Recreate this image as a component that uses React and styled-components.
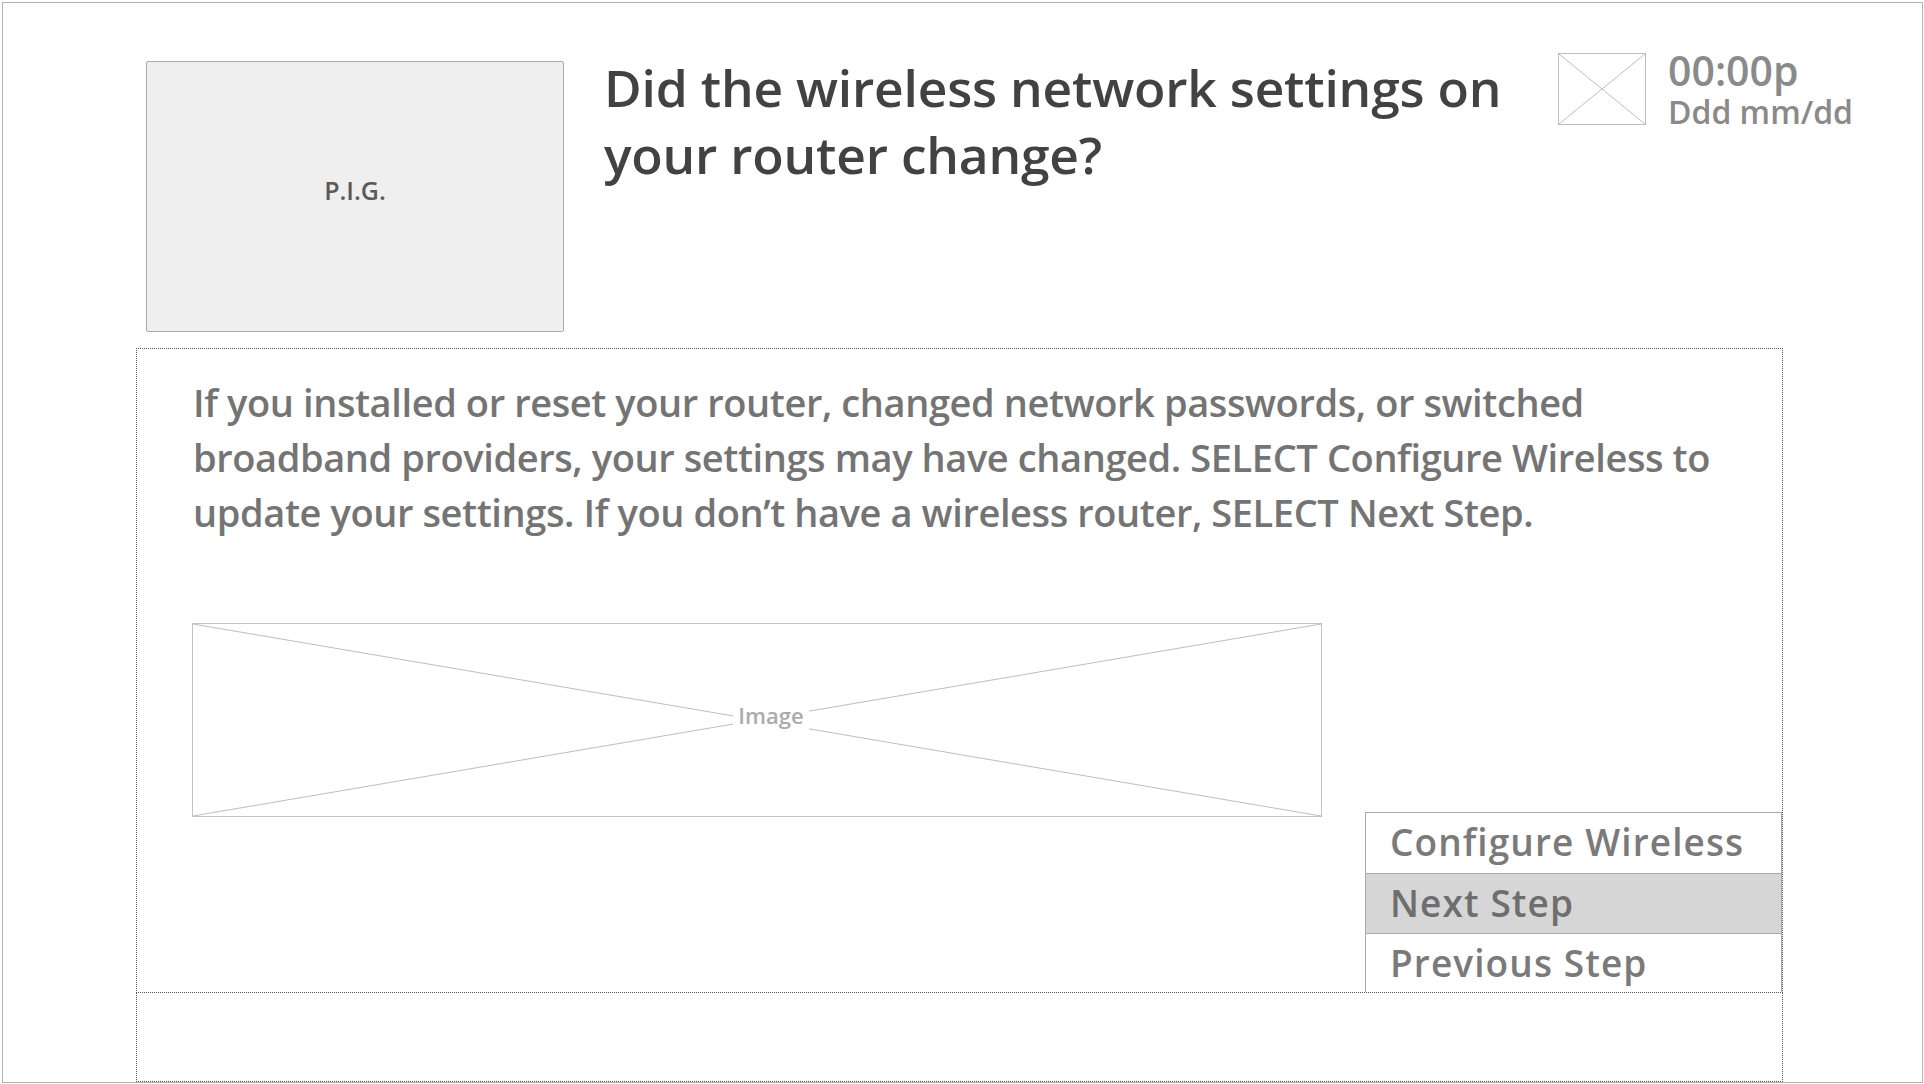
import React from "react";
import styled, { createGlobalStyle } from "styled-components";

const Global = createGlobalStyle`
  html, body { margin: 0; padding: 0; background: #ffffff; }
  body { font-family: "Open Sans", "Noto Sans", sans-serif; }
  * { box-sizing: border-box; }
`;

const Frame = styled.div`
  margin: 2px;
  width: 1921px;
  height: 1081px;
  border: 1px solid #b3b3b3;
  background: #fff;
  display: flex;
  flex-direction: column;
  overflow: hidden;
`;

const Header = styled.header`
  display: flex;
  align-items: flex-start;
  padding: 47px 0 16px 143px;
`;

const Pig = styled.div`
  margin-top: 11px;
  width: 418px;
  height: 271px;
  flex: 0 0 auto;
  background: #efefef;
  border: 1px solid #aaaaaa;
  border-radius: 2px;
  display: flex;
  align-items: center;
  justify-content: center;
  padding-bottom: 14px;
  color: #5a5a5a;
  font-size: 25px;
  font-weight: 600;
`;

const Title = styled.h1`
  margin: 4px 0 0 40px;
  width: 930px;
  flex: 0 0 auto;
  font-size: 51.5px;
  line-height: 67px;
  font-weight: 600;
  letter-spacing: -0.2px;
  color: #424242;
`;

const Clock = styled.div`
  margin-left: 24px;
  display: flex;
  align-items: flex-start;
  gap: 22px;
`;

const IconBox = styled.div`
  margin-top: 3px;
  width: 88px;
  height: 72px;
  border: 1px solid #bdbdbd;
  svg { display: block; width: 100%; height: 100%; }
`;

const ClockText = styled.div`
  display: flex;
  flex-direction: column;
  gap: 3px;
  color: #8a8a8a;
  font-weight: 600;
`;

const Time = styled.div`
  font-size: 41px;
  line-height: 41px;
`;

const DateText = styled.div`
  font-size: 32px;
  line-height: 36px;
`;

const Panel = styled.section`
  margin-left: 133px;
  width: 1647px;
  height: 646px;
  border: 1px dotted #555;
  display: flex;
  flex-direction: column;
  padding: 26px 0 0 56px;
`;

const Paragraph = styled.p`
  margin: 0;
  font-size: 38px;
  line-height: 55px;
  font-weight: 600;
  letter-spacing: -0.4px;
  color: #747474;
`;

const LowerRow = styled.div`
  flex: 1;
  display: flex;
  justify-content: space-between;
  align-items: flex-end;
  margin-top: 83px;
`;

const ImageBox = styled.div`
  align-self: flex-start;
  margin-left: -1px;
  position: relative;
  width: 1130px;
  height: 194px;
  border: 1.5px solid #c2c2c2;
  display: flex;
  align-items: center;
  justify-content: center;
  svg { position: absolute; inset: 0; width: 100%; height: 100%; }
`;

const ImageLabel = styled.span`
  position: relative;
  margin: -10px 0 0 28px;
  background: #fff;
  padding: 4px 5px;
  font-size: 22px;
  line-height: 26px;
  font-weight: 600;
  color: #ababab;
`;

const Menu = styled.div`
  width: 417px;
  display: flex;
  flex-direction: column;
  border: 1px solid #aaaaaa;
  border-bottom: none;
`;

const MenuItem = styled.div`
  height: 60px;
  padding-left: 24px;
  font-size: 37px;
  line-height: 58px;
  font-weight: 600;
  letter-spacing: 1.1px;
  color: ${(p) => (p.$active ? "#6e6e6e" : "#7a7a7a")};
  background: ${(p) => (p.$active ? "#d6d6d6" : "#ffffff")};
  & + & { border-top: 1px solid #aaaaaa; }
  &:last-child { height: 59px; }
`;

const Footer = styled.footer`
  margin-left: 133px;
  width: 1647px;
  height: 89px;
  border: 1px dotted #555;
  border-top: none;
`;

const Cross = () => (
  <svg viewBox="0 0 100 100" preserveAspectRatio="none">
    <line x1="0" y1="0" x2="100" y2="100" stroke="#bdbdbd" strokeWidth="1" vectorEffect="non-scaling-stroke" />
    <line x1="100" y1="0" x2="0" y2="100" stroke="#bdbdbd" strokeWidth="1" vectorEffect="non-scaling-stroke" />
  </svg>
);

const items = ["Configure Wireless", "Next Step", "Previous Step"];

export default function App() {
  return (
    <>
      <Global />
      <Frame>
        <Header>
          <Pig>P.I.G.</Pig>
          <Title>Did the wireless network settings on your router change?</Title>
          <Clock>
            <IconBox>
              <Cross />
            </IconBox>
            <ClockText>
              <Time>00:00p</Time>
              <DateText>Ddd mm/dd</DateText>
            </ClockText>
          </Clock>
        </Header>
        <Panel>
          <Paragraph>
            If you installed or reset your router, changed network passwords, or switched
            <br />
            broadband providers, your settings may have changed. SELECT Configure Wireless to
            <br />
            update your settings. If you don’t have a wireless router, SELECT Next Step.
          </Paragraph>
          <LowerRow>
            <ImageBox>
              <Cross />
              <ImageLabel>Image</ImageLabel>
            </ImageBox>
            <Menu>
              {items.map((t) => (
                <MenuItem key={t} $active={t === "Next Step"}>
                  {t}
                </MenuItem>
              ))}
            </Menu>
          </LowerRow>
        </Panel>
        <Footer />
      </Frame>
    </>
  );
}
